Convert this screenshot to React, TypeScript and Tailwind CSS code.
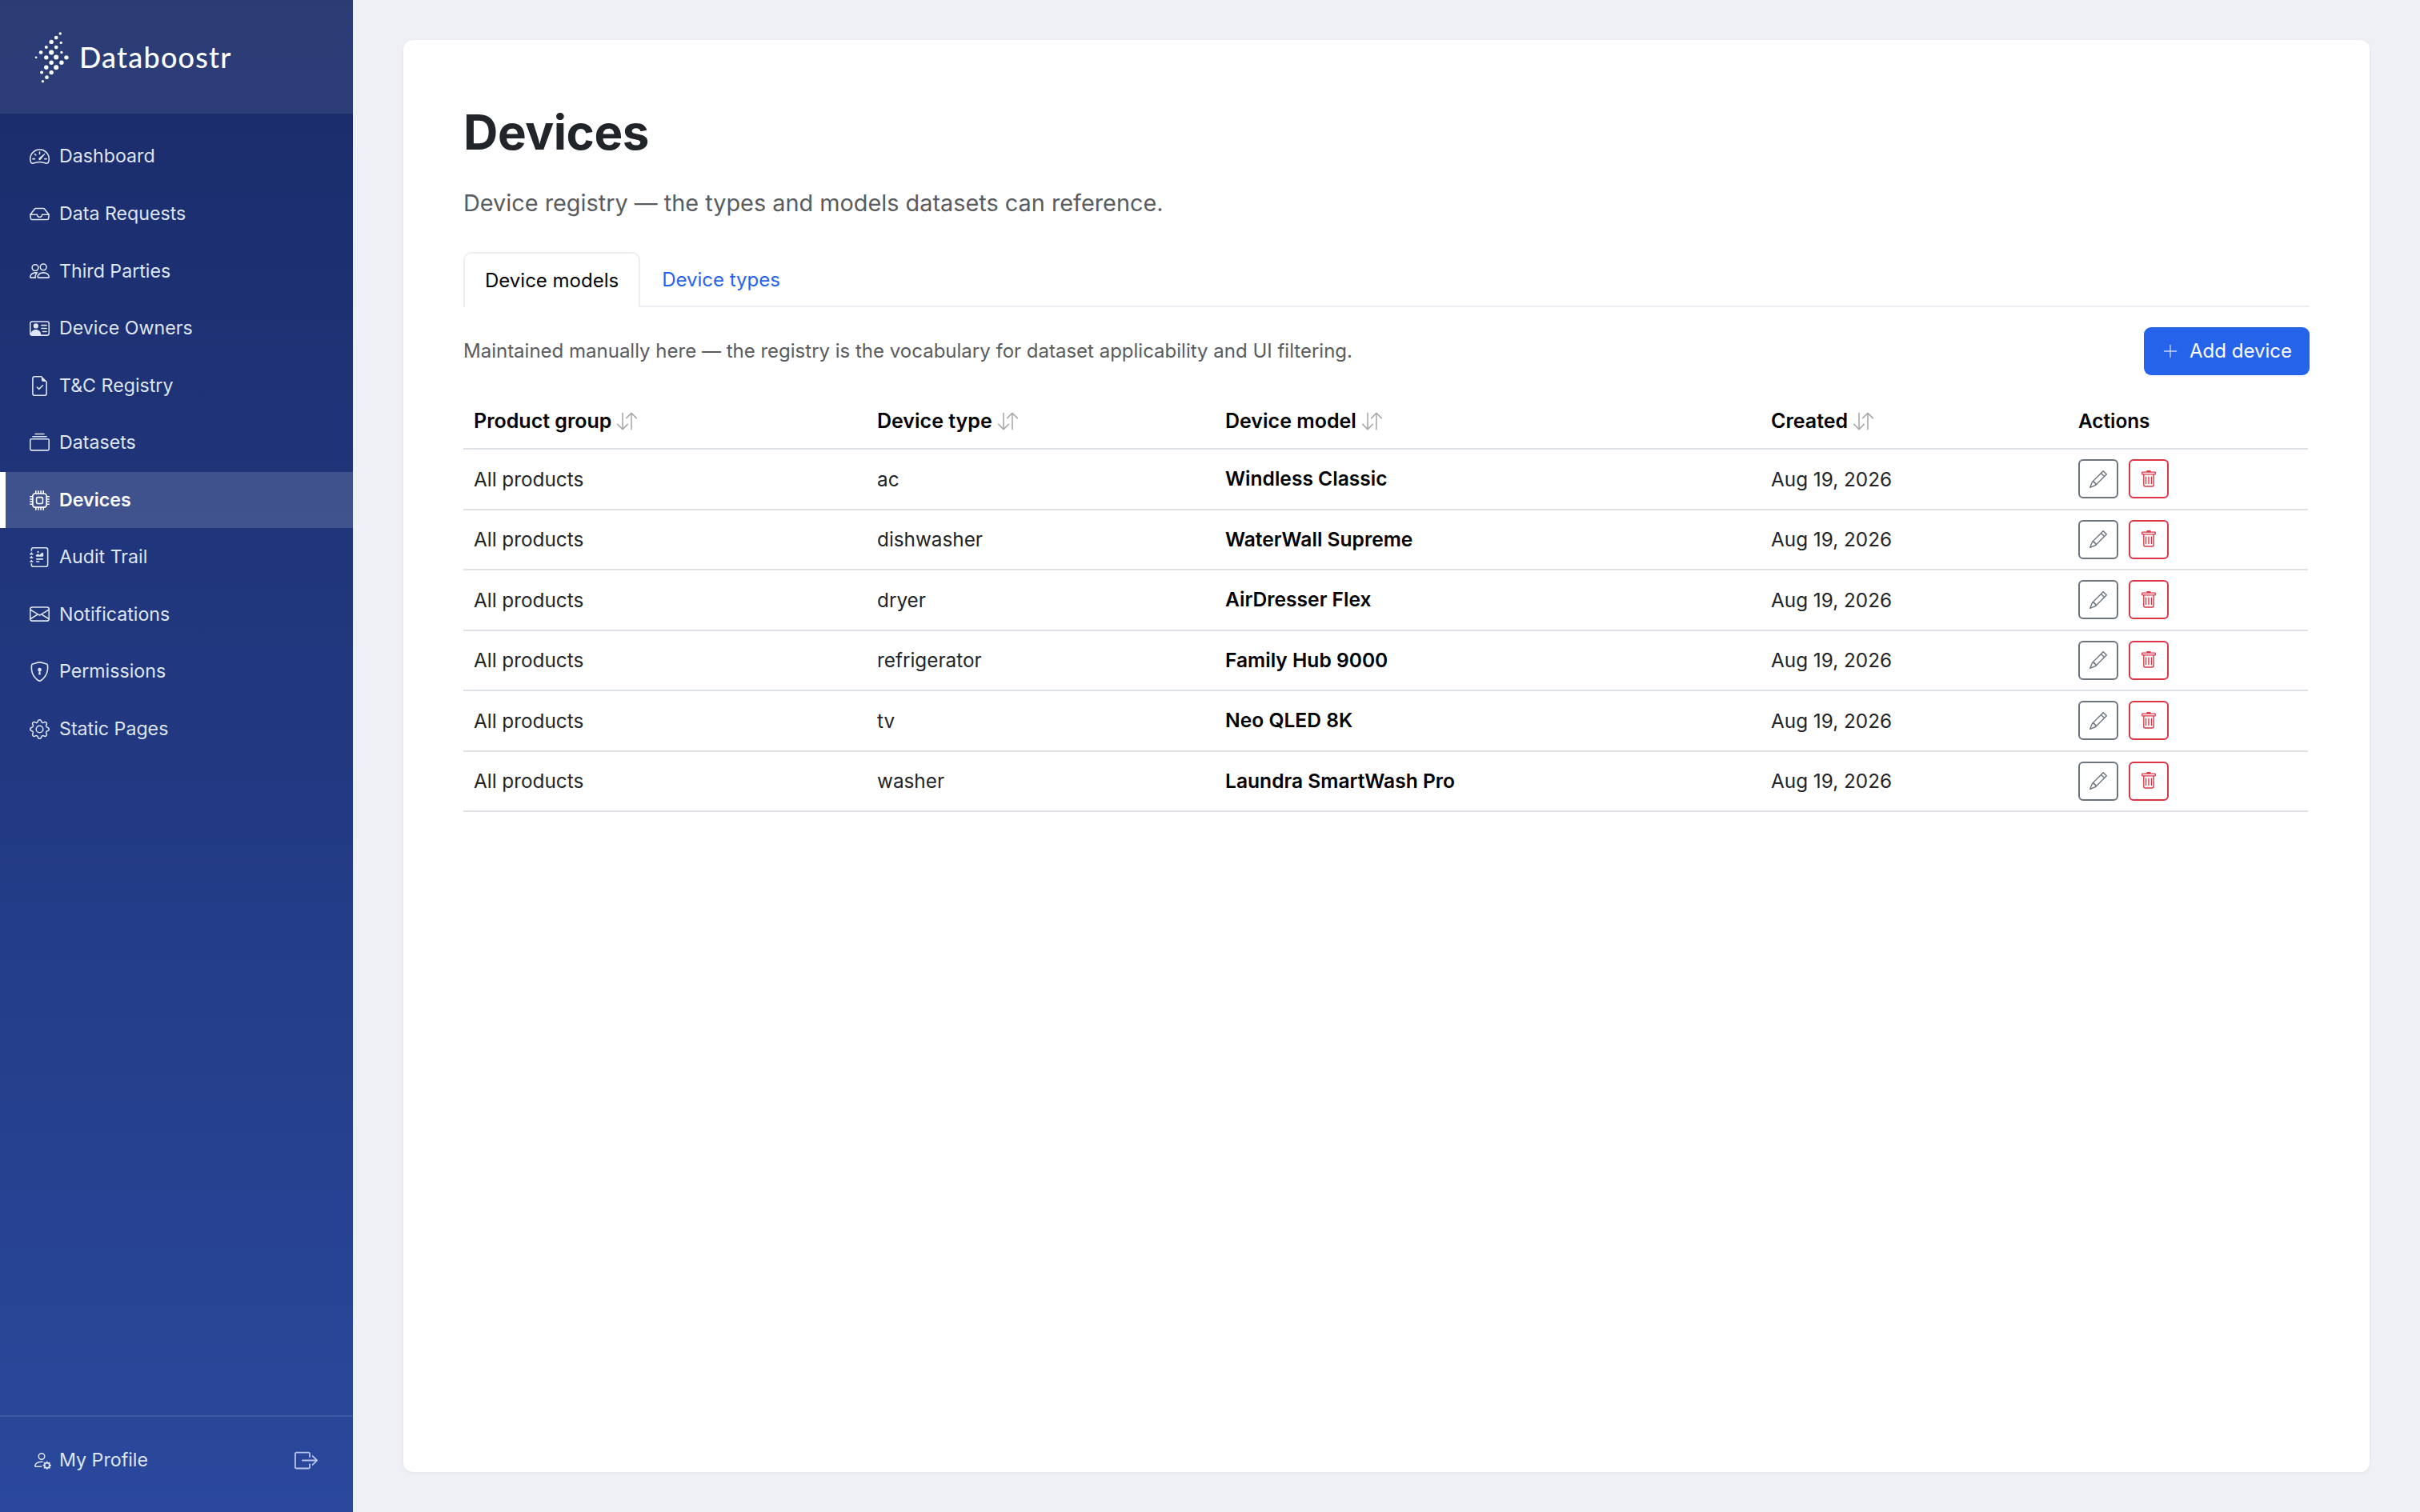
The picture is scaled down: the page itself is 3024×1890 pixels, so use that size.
import type { IconType } from 'react-icons';
import {
  BsArrowDownUp,
  BsBoxArrowRight,
  BsCollection,
  BsCpu,
  BsEnvelope,
  BsFileEarmarkCheck,
  BsGear,
  BsInbox,
  BsJournalRichtext,
  BsPencil,
  BsPeople,
  BsPersonGear,
  BsPersonVcard,
  BsPlusLg,
  BsShieldLock,
  BsSpeedometer2,
  BsTrash,
} from 'react-icons/bs';

type NavItem = { label: string; icon: IconType; active?: boolean };

const navItems: NavItem[] = [
  { label: 'Dashboard', icon: BsSpeedometer2 },
  { label: 'Data Requests', icon: BsInbox },
  { label: 'Third Parties', icon: BsPeople },
  { label: 'Device Owners', icon: BsPersonVcard },
  { label: 'T&C Registry', icon: BsFileEarmarkCheck },
  { label: 'Datasets', icon: BsCollection },
  { label: 'Devices', icon: BsCpu, active: true },
  { label: 'Audit Trail', icon: BsJournalRichtext },
  { label: 'Notifications', icon: BsEnvelope },
  { label: 'Permissions', icon: BsShieldLock },
  { label: 'Static Pages', icon: BsGear },
];

const rows = [
  { type: 'ac', model: 'Windless Classic' },
  { type: 'dishwasher', model: 'WaterWall Supreme' },
  { type: 'dryer', model: 'AirDresser Flex' },
  { type: 'refrigerator', model: 'Family Hub 9000' },
  { type: 'tv', model: 'Neo QLED 8K' },
  { type: 'washer', model: 'Laundra SmartWash Pro' },
];

const logoDots = [
  [165, 62, 5], [150, 77, 7], [132, 93, 8], [168, 96, 5], [150, 113, 7], [113, 113, 6], [93, 132, 7],
  [132, 132, 9], [170, 132, 5], [75, 151, 4], [113, 151, 8], [150, 150, 9], [188, 151, 8], [132, 170, 8],
  [170, 170, 8], [113, 188, 8], [150, 188, 9], [96, 207, 6], [132, 207, 8], [115, 225, 7], [100, 240, 5],
];

const SortHeader = ({ label }: { label: string }) => (
  <th className="px-[13px] pt-[2px] text-left text-[25px] font-semibold text-black">
    <span className="inline-flex items-center gap-[7px]">
      {label}
      <BsArrowDownUp className="text-[25px] text-[#a8a8a8]" />
    </span>
  </th>
);

const App = () => {
  return (
    <div className="flex h-[1890px] w-[3024px] bg-[#eef0f5] font-['Inter',sans-serif] text-[24.3px]">
      <aside className="flex w-[441px] shrink-0 flex-col bg-gradient-to-b from-[#1a2b69] to-[#2a489c] text-[#dfe5f3]">
        <div className="flex h-[142px] items-center gap-[12px] bg-white/[0.08] pl-[40px]">
          <svg viewBox="60 50 140 200" className="h-[67px] w-[47px]" fill="#fff">
            {logoDots.map(([cx, cy, r]) => (
              <circle key={`${cx}-${cy}`} cx={cx} cy={cy} r={r} />
            ))}
          </svg>
          <span className="font-['Lato',sans-serif] text-[36px] font-medium tracking-[1.2px] text-white">Databoostr</span>
        </div>

        <nav className="flex flex-col pt-[18px]">
          {navItems.map((item) => {
            const Icon = item.icon;
            return (
              <div
                key={item.label}
                className={
                  item.active
                    ? 'my-[0.5px] flex h-[70px] items-center gap-[12px] border-l-[7px] border-white bg-white/15 pl-[30px] font-semibold text-white'
                    : 'flex h-[71.6px] items-center gap-[12px] pl-[37px]'
                }
              >
                <Icon className="shrink-0 text-[25px]" />
                <span className="text-[23.2px]">{item.label}</span>
              </div>
            );
          })}
        </nav>

        <div className="mt-auto flex h-[121px] items-center justify-between border-t-2 border-white/10 pb-[10px] pl-[40px] pr-[44px]">
          <div className="flex items-center gap-[10px]">
            <BsPersonGear className="text-[24px]" />
            <span className="text-[23.2px]">My Profile</span>
          </div>
          <BsBoxArrowRight className="text-[29px] text-[#b9c6ea]" />
        </div>
      </aside>

      <main className="flex-1 pb-[50px] pl-[63px] pr-[63px] pt-[50px]">
        <div className="h-[1790px] rounded-[12px] bg-white px-[75px] pt-[75px] shadow-[0_1px_4px_rgba(0,0,0,0.06)]">
          <h1 className="text-[60px] font-bold leading-[80px] tracking-[-0.4px] text-[#212529]">Devices</h1>
          <p className="mt-[27px] text-[28.85px] leading-[44px] text-[#595c5f]">
            Device registry — the types and models datasets can reference.
          </p>

          <div className="mt-[39px] flex h-[69px] border-b-2 border-[#eceef1]">
            <div className="-mb-[2px] flex h-[69px] items-center rounded-t-[10px] border-2 border-b-0 border-[#eceef1] bg-white px-[25px] text-[24px] text-black">
              Device models
            </div>
            <div className="flex items-center px-[27px] pt-[2px] text-[24px] text-[#2563eb]">Device types</div>
          </div>

          <div className="mt-[25px] flex h-[60px] items-center justify-between">
            <p className="text-[24px] text-[#595c5f]">
              Maintained manually here — the registry is the vocabulary for dataset applicability and UI filtering.
            </p>
            <button className="flex h-[60px] w-[207px] items-center justify-center gap-[13px] rounded-[9px] bg-[#2563eb] text-[24px] text-white">
              <BsPlusLg className="text-[22px] text-[#c5d6fa]" />
              Add device
            </button>
          </div>

          <table className="mt-[22px] w-[2305px] table-fixed border-collapse">
            <colgroup>
              <col className="w-[504px]" />
              <col className="w-[435px]" />
              <col className="w-[682px]" />
              <col className="w-[384px]" />
              <col />
            </colgroup>
            <thead>
              <tr className="h-[70px] border-b-2 border-[#dee2e6]">
                <SortHeader label="Product group" />
                <SortHeader label="Device type" />
                <SortHeader label="Device model" />
                <SortHeader label="Created" />
                <th className="px-[13px] pt-[2px] text-left font-semibold text-black">Actions</th>
              </tr>
            </thead>
            <tbody>
              {rows.map((row) => (
                <tr key={row.type} className="h-[75.5px] border-b-2 border-[#dee2e6] text-[#212529]">
                  <td className="px-[13px]">All products</td>
                  <td className="px-[13px]">{row.type}</td>
                  <td className="px-[13px] text-[24.6px] font-semibold text-black">{row.model}</td>
                  <td className="px-[13px]">Aug 19, 2026</td>
                  <td className="px-[13px]">
                    <div className="flex gap-[13px]">
                      <button className="flex h-[49px] w-[50px] items-center justify-center rounded-[6px] border-2 border-[#6c757d] text-[#6c757d]">
                        <BsPencil className="text-[22px]" />
                      </button>
                      <button className="flex h-[49px] w-[50px] items-center justify-center rounded-[6px] border-2 border-[#dc3545] text-[#dc3545]">
                        <BsTrash className="text-[22px]" />
                      </button>
                    </div>
                  </td>
                </tr>
              ))}
            </tbody>
          </table>
        </div>
      </main>
    </div>
  );
};

export default App;
